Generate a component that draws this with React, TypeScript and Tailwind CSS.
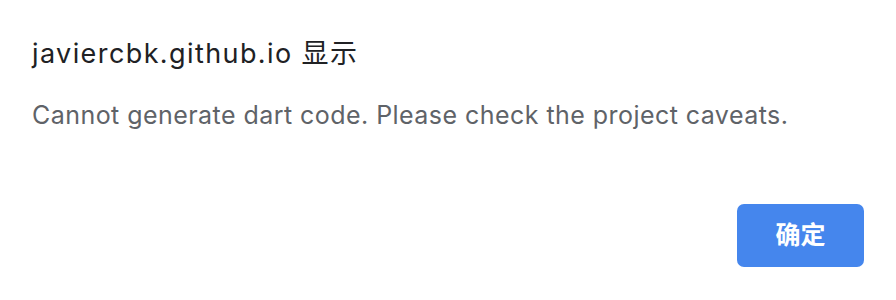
export default function App() {
  return (
    <div className="flex h-[300px] w-[896px] flex-col bg-white px-8 pt-[36px] pb-[33px] font-['Inter','Noto_Sans_CJK_SC',sans-serif]">
      <h1 className="text-[27px] leading-[36px] tracking-[1.4px] text-[#202124]">
        javiercbk.github.io 显示
      </h1>
      <p className="mt-[27px] text-[25px] leading-[32px] tracking-[0.45px] text-[#5f6368]">
        Cannot generate dart code. Please check the project caveats.
      </p>
      <div className="mt-auto flex justify-end">
        <button className="h-[63px] w-[127px] rounded-[7px] bg-[#4586ed] text-[25px] font-bold text-white">
          确定
        </button>
      </div>
    </div>
  );
}
